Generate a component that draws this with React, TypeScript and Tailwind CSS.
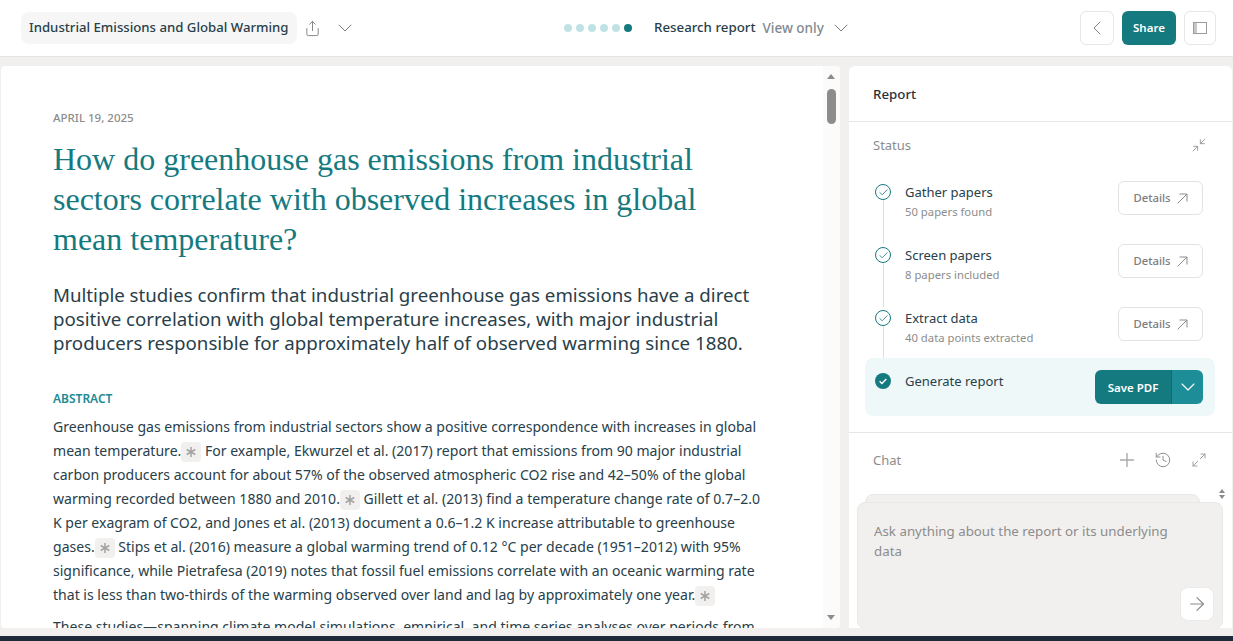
import React from "react";
import { ChevronDown, ChevronLeft, Minimize2, Maximize2, Plus, History, ArrowRight, Share, Check } from "lucide-react";

const font = { fontFamily: '"Noto Sans", "Open Sans", sans-serif' };

function Cite() {
  return (
    <span className="-my-1 inline-flex h-5 w-5 items-center justify-center rounded-[4px] bg-[#f1f0ee] align-middle text-[#a3a3a3]">
      <svg width="12" height="12" viewBox="0 0 12 12" stroke="currentColor" strokeWidth="1.5" fill="none">
        <path d="M6 1v10M1.7 3.5l8.6 5M10.3 3.5l-8.6 5" />
      </svg>
    </span>
  );
}

function Step({ title, sub, h }: { title: string; sub: string; h: string }) {
  return (
    <div className={`relative flex items-start pl-[10px] pr-[12px] ${h}`}>
      <div className="absolute bottom-0 left-[18px] top-[19px] w-px bg-[#dedede]" />
      <div className="mt-[3px] flex h-4 w-4 shrink-0 items-center justify-center rounded-full border-[1.5px] border-[#157a80] text-[#157a80]">
        <Check size={11} strokeWidth={1.8} />
      </div>
      <div className="ml-[14px] mt-px flex-1">
        <div className="text-[13px] leading-[20px] text-[#28404a]">{title}</div>
        <div className="text-[11.3px] leading-[20px] text-[#8c8c8c]">{sub}</div>
      </div>
      <button className="flex h-[34px] w-[85px] items-center justify-center gap-[6px] rounded-md border border-[#e3e3e3] bg-white pt-px text-[11.3px] font-medium text-[#7d7d7d]">
        Details
        <svg width="11" height="11" viewBox="0 0 11 11" fill="none" stroke="#8c8c8c" strokeWidth="1">
          <path d="M0.7 10.3L10 1M2.5 1H10v7.5" />
        </svg>
      </button>
    </div>
  );
}

export default function App() {
  return (
    <div className="flex h-[641px] w-[1233px] flex-col overflow-hidden bg-[#f1f0ee]" style={font}>
      <header className="flex h-[57px] shrink-0 items-center border-b border-[#e4e4e4] bg-white pl-[21px] pr-[17px]">
        <div className="flex w-[400px] items-center">
          <div className="flex h-8 items-center rounded-lg bg-[#f6f6f6] px-2 text-[13.2px] font-medium text-[#28404a]">
            Industrial Emissions and Global Warming
          </div>
          <Share size={17} strokeWidth={1.3} className="ml-[7px] text-[#7d7d7d]" />
          <ChevronDown size={24} strokeWidth={1} className="ml-[12px] text-[#7d7d7d]" />
        </div>
        <div className="ml-[143px] flex items-center">
          <div className="flex gap-[4px]">
            <span className="h-2 w-2 rounded-full bg-[#bfe3e5]" />
            <span className="h-2 w-2 rounded-full bg-[#bfe3e5]" />
            <span className="h-2 w-2 rounded-full bg-[#bfe3e5]" />
            <span className="h-2 w-2 rounded-full bg-[#bfe3e5]" />
            <span className="h-2 w-2 rounded-full bg-[#bfe3e5]" />
            <span className="h-2 w-2 rounded-full bg-[#157a80]" />
          </div>
          <span className="ml-[22px] text-[13.3px] font-medium text-[#28404a]">Research report</span>
          <span className="ml-[7px] text-[13.5px] font-medium text-[#7f8a90]">View only</span>
          <ChevronDown size={24} strokeWidth={1} className="ml-[5px] text-[#7d7d7d]" />
        </div>
        <div className="ml-auto flex items-center">
          <button className="flex h-[34px] w-[34px] items-center justify-center rounded-md border border-[#e6e6e6] text-[#7d7d7d]">
            <ChevronLeft size={24} strokeWidth={1} />
          </button>
          <button className="ml-[8px] flex h-[34px] w-[54px] items-center justify-center rounded-md bg-[#157a80] text-[11.5px] font-semibold text-white">
            Share
          </button>
          <button className="ml-[8px] flex h-[34px] w-[32px] items-center justify-center rounded-md border border-[#e6e6e6] text-[#9a9a9a]">
            <svg width="14" height="12" viewBox="0 0 14 12">
              <rect x="0.5" y="0.5" width="13" height="11" fill="none" stroke="currentColor" />
              <rect x="1" y="1" width="3" height="10" fill="currentColor" opacity="0.55" />
            </svg>
          </button>
        </div>
      </header>

      <main className="flex min-h-0 flex-1 gap-[9px] pb-2 pl-px pr-px pt-[9px]">
        <section className="relative h-[562px] w-[839px] shrink-0 overflow-hidden rounded-sm bg-white pl-[52px] pr-[75px] pt-[44px]">
          <div className="text-[11.5px] font-medium leading-4 text-[#8c8c8c]">APRIL 19, 2025</div>
          <h1 className="mt-[13px] max-w-[670px] text-[32px] leading-[40px] text-[#157a80]" style={{ fontFamily: '"Liberation Serif", serif' }}>
            How do greenhouse gas emissions from industrial sectors correlate with observed increases in global mean temperature?
          </h1>
          <p className="mt-[24px] max-w-[700px] text-[18.7px] leading-[24px] text-[#28404a]">
            Multiple studies confirm that industrial greenhouse gas emissions have a direct positive correlation with global temperature increases, with major industrial producers responsible for approximately half of observed warming since 1880.
          </p>
          <h2 className="mt-[36px] text-[12px] font-semibold leading-4 text-[#1b8a93]">ABSTRACT</h2>
          <p className="mt-[8px] text-[14.05px] leading-[24px] text-[#28404a]">
            Greenhouse gas emissions from industrial sectors show a positive correspondence with increases in global mean temperature.<Cite /> For example, Ekwurzel et al. (2017) report that emissions from 90 major industrial carbon producers account for about 57% of the observed atmospheric CO2 rise and 42–50% of the global warming recorded between 1880 and 2010.<Cite /> Gillett et al. (2013) find a temperature change rate of 0.7–2.0 K per exagram of CO2, and Jones et al. (2013) document a 0.6–1.2 K increase attributable to greenhouse gases.<Cite /> Stips et al. (2016) measure a global warming trend of 0.12 °C per decade (1951–2012) with 95% significance, while Pietrafesa (2019) notes that fossil fuel emissions correlate with an oceanic warming rate that is less than two-thirds of the warming observed over land and lag by approximately one year.<Cite />
          </p>
          <p className="mt-[8px] text-[14.05px] leading-[24px] text-[#28404a]">
            These studies—spanning climate model simulations, empirical, and time series analyses over periods from
          </p>
          <div className="absolute right-0 top-0 h-full w-[17px] bg-[#fbfbfb]">
            <div className="absolute left-[4px] top-[8px] h-0 w-0 border-x-[4.5px] border-b-[5px] border-x-transparent border-b-[#8c8c8c]" />
            <div className="absolute left-[4px] top-[23px] h-[35px] w-[9px] rounded-full bg-[#8c8c8c]" />
            <div className="absolute bottom-[8px] left-[4px] h-0 w-0 border-x-[4.5px] border-t-[5px] border-x-transparent border-t-[#8c8c8c]" />
          </div>
        </section>

        <aside className="relative flex h-[562px] w-[383px] shrink-0 flex-col overflow-hidden rounded-t-md bg-white">
          <div className="flex h-[56px] shrink-0 items-center border-b border-[#e6e6e6] pl-6 pt-[2px] text-[13.3px] font-medium text-[#28303a]">Report</div>
          <div className="flex items-center justify-between pl-6 pr-[25px] pt-[13px]">
            <span className="text-[13px] leading-[20px] text-[#8c8c8c]">Status</span>
            <Minimize2 size={16} strokeWidth={1.4} className="text-[#999999]" />
          </div>
          <div className="ml-4 mr-[17px] mt-[26px]">
            <Step title="Gather papers" sub="50 papers found" h="h-[63px]" />
            <Step title="Screen papers" sub="8 papers included" h="h-[63px]" />
            <Step title="Extract data" sub="40 data points extracted" h="h-[51px]" />
            <div className="flex h-[58px] items-start rounded-lg bg-[#eff8f8] pl-[10px] pr-[12px]">
              <svg width="16" height="16" viewBox="0 0 16 16" className="mt-[15px] shrink-0">
                <circle cx="8" cy="8" r="8" fill="#157a80" />
                <path d="M4.6 8.3l2.3 2.2 4.4-4.6" stroke="#fff" strokeWidth="1.4" fill="none" />
              </svg>
              <div className="ml-[14px] mt-[13px] flex-1 text-[13px] leading-[20px] text-[#28404a]">Generate report</div>
              <div className="mt-[12px] flex h-[34px] w-[108px] overflow-hidden rounded-md text-white">
                <div className="flex w-[76px] items-center justify-center bg-[#157a80] pt-px text-[11.5px] font-semibold">Save PDF</div>
                <div className="flex flex-1 items-center justify-center border-l border-[#12696e] bg-[#1d8e98]">
                  <ChevronDown size={24} strokeWidth={1.1} />
                </div>
              </div>
            </div>
          </div>
          <div className="mt-4 flex items-center border-t border-[#e6e6e6] pl-6 pr-[25px] pt-[16px]">
            <span className="text-[13px] leading-[20px] text-[#8c8c8c]">Chat</span>
            <Plus size={22} strokeWidth={1.5} className="ml-auto text-[#a8a8a8]" />
            <History size={18} strokeWidth={1.3} className="ml-[16px] text-[#8c8c8c]" />
            <Maximize2 size={16} strokeWidth={1.4} className="ml-[19px] text-[#999999]" />
          </div>
          <div className="absolute left-[16px] top-[428px] h-10 w-[335px] rounded-t-lg border border-[#e8e8e6] bg-[#f1f0ee]" />
          <div className="absolute right-[7px] top-[423px] flex flex-col gap-[2px]">
            <div className="h-0 w-0 border-x-[3px] border-b-[4px] border-x-transparent border-b-[#8c8c8c]" />
            <div className="h-0 w-0 border-x-[3px] border-t-[4px] border-x-transparent border-t-[#8c8c8c]" />
          </div>
          <div className="absolute left-[8px] top-[436px] h-[127px] w-[366px] rounded-lg border border-[#e8e8e6] bg-[#f1f0ee] pl-4 pr-[40px] pt-[18px]">
            <div className="text-[13.3px] leading-[20px] text-[#8c8c8c]">Ask anything about the report or its underlying data</div>
            <button className="absolute bottom-[7px] right-[8px] flex h-[34px] w-[34px] items-center justify-center rounded-lg border border-[#ebebeb] bg-white text-[#8c8c8c]">
              <ArrowRight size={22} strokeWidth={1.3} />
            </button>
          </div>
        </aside>
      </main>
      <div className="h-[5px] shrink-0 bg-[#1f2a38]" />
    </div>
  );
}
